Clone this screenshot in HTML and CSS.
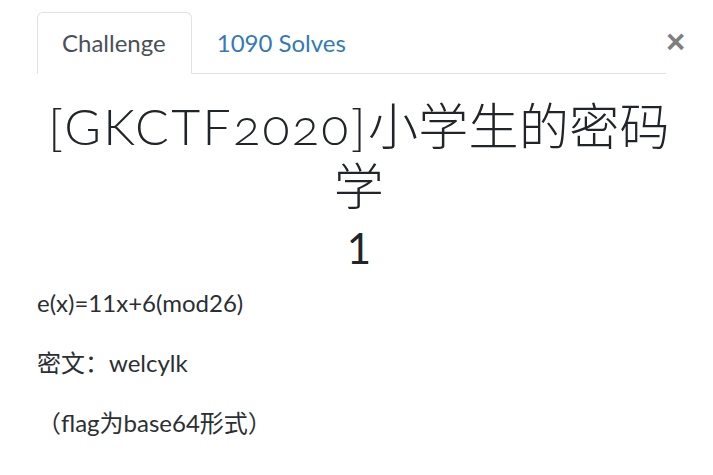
FILE: index.html
```html
<!DOCTYPE html>
<html lang="zh">
<head>
<meta charset="utf-8">
<title>Challenge</title>
<link rel="stylesheet" href="styles.css">
</head>
<body>
<div class="modal">
  <div class="tabs-row">
    <ul class="nav-tabs">
      <li class="tab active">Challenge</li>
      <li class="tab link">1090 Solves</li>
    </ul>
    <button class="close" aria-label="Close">&times;</button>
  </div>
  <h3 class="chal-name"><span class="latin">[GKCTF2020]</span>小学生的密码学</h3>
  <h4 class="chal-value">1</h4>
  <div class="desc">
    <p>e(x)=11x+6(mod26)</p>
    <p>密文：welcylk</p>
    <p>（flag为base64形式）</p>
  </div>
</div>
</body>
</html>
```
FILE: styles.css
```css
html, body {
  margin: 0;
  padding: 0;
  background: #fff;
}
body {
  font-family: Lato, "Noto Sans CJK SC", sans-serif;
  font-size: 24px;
  line-height: 1.5;
  color: #2b2f33;
}
.modal {
  width: 644px;
  margin-left: 37px;
  padding-top: 12px;
}
.tabs-row {
  display: flex;
  align-items: flex-start;
}
.nav-tabs {
  list-style: none;
  margin: 0;
  padding: 0;
  display: flex;
  flex: 1;
  border-bottom: 1px solid #dee2e6;
  margin-right: 15px;
}
.tab {
  padding: 12px 25px 12px 24px;
  line-height: 36px;
  border: 1px solid transparent;
  border-top-left-radius: 6px;
  border-top-right-radius: 6px;
  margin-bottom: -1px;
}
.tab.active {
  color: #495057;
  border-color: #dee2e6 #dee2e6 #fff;
  background: #fff;
}
.tab.link {
  color: #337ab7;
}
.close {
  width: 0;
  padding: 0;
  margin: 0;
  border: 0;
  background: none;
  font-family: "Liberation Sans", sans-serif;
  font-size: 33px;
  font-weight: 700;
  line-height: 1;
  color: #000;
  opacity: 0.5;
  position: relative;
  top: 13px;
  left: -15px;
  overflow: visible;
  white-space: nowrap;
}
.chal-name {
  margin: 22px 0 0;
  font-size: 50px;
  line-height: 60px;
  font-weight: 300;
  letter-spacing: 0.3px;
  text-align: center;
  color: #212529;
  font-variant-numeric: oldstyle-nums;
}
.chal-name .latin {
  letter-spacing: 2.4px;
}
.chal-value {
  margin: 7px 0 0;
  font-size: 42px;
  line-height: 50px;
  font-weight: 400;
  text-align: center;
  color: #212529;
}
.desc {
  margin-top: 12px;
}
.desc p {
  margin: 0 0 24px;
  line-height: 36px;
}
```
